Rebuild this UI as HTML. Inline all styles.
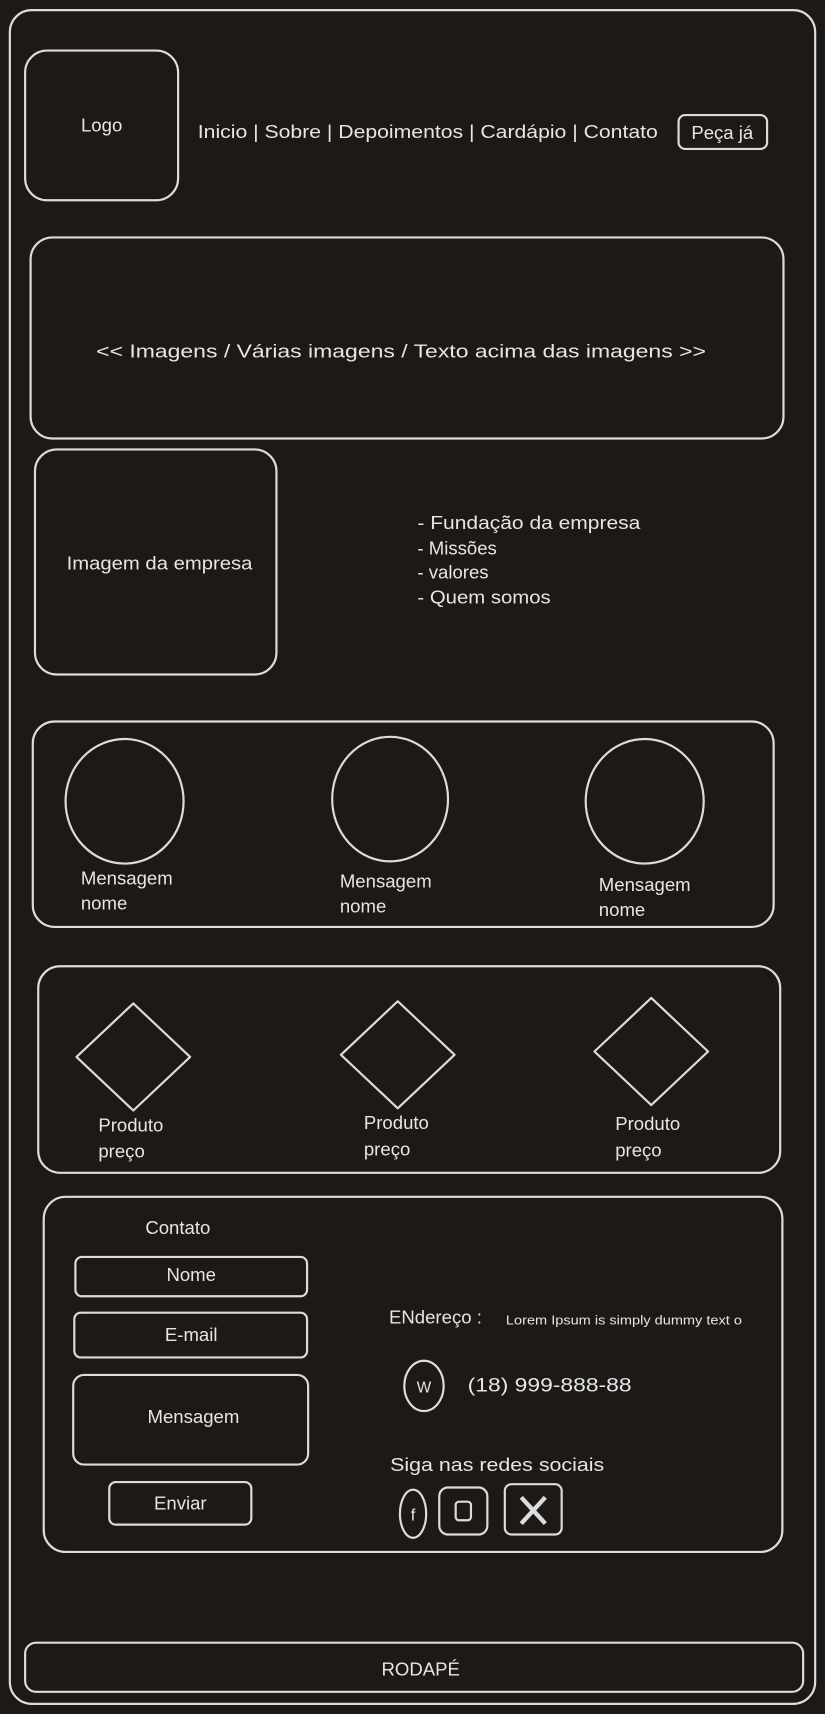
<!DOCTYPE html>
<html><head><meta charset="utf-8"><style>
html,body{margin:0;padding:0;background:#1c1917;}
svg{display:block}
text{font-family:"Liberation Sans",sans-serif;fill:#e6e6e6}
</style></head><body>
<svg width="825" height="1714" viewBox="0 0 755 1568" xmlns="http://www.w3.org/2000/svg" font-size="17">
<rect width="755" height="1568" fill="#1c1917"/>
<g fill="none" stroke="#dcdcdc" stroke-width="2">
<rect x="9" y="9" width="737" height="1550" rx="20"/>
<rect x="23" y="46" width="140" height="137" rx="20"/>
<rect x="621" y="105" width="81" height="31" rx="6"/>
<rect x="28" y="217" width="689" height="184" rx="20"/>
<rect x="32" y="411" width="221" height="206" rx="20"/>
<rect x="30" y="660" width="678" height="188" rx="20"/>
<ellipse cx="114" cy="733" rx="54" ry="57"/>
<ellipse cx="357" cy="731" rx="53" ry="57"/>
<ellipse cx="590" cy="733" rx="54" ry="57"/>
<rect x="35" y="884" width="679" height="189" rx="20"/>
<path d="M122 918 L174 967 L122 1016 L70 967 Z" stroke-linejoin="round"/>
<path d="M364 916 L416 965 L364 1014 L312 965 Z" stroke-linejoin="round"/>
<path d="M596 913 L648 962 L596 1011 L544 962 Z" stroke-linejoin="round"/>
<rect x="40" y="1095" width="676" height="325" rx="20"/>
<rect x="69" y="1150" width="212" height="36" rx="6"/>
<rect x="68" y="1201" width="213" height="41" rx="6"/>
<rect x="67" y="1258" width="215" height="82" rx="10"/>
<rect x="100" y="1356" width="130" height="39" rx="6"/>
<ellipse cx="388" cy="1268" rx="18" ry="23"/>
<ellipse cx="378" cy="1385" rx="12" ry="22"/>
<rect x="402" y="1361" width="44" height="43" rx="8"/>
<rect x="417" y="1374" width="14" height="17" rx="3"/>
<rect x="462" y="1358" width="52" height="46" rx="6"/>
<path d="M477 1370 L499 1394 M499 1370 L477 1394" stroke-width="4"/>
<rect x="23" y="1503" width="712" height="45" rx="10"/>
</g>
<text x="93" y="120" text-anchor="middle">Logo</text>
<text x="181" y="126" font-size="16.5" textLength="421" lengthAdjust="spacingAndGlyphs">Inicio |  Sobre | Depoimentos | Cardápio | Contato</text>
<text x="661" y="127" text-anchor="middle">Peça já</text>
<text x="88" y="327" textLength="558" lengthAdjust="spacingAndGlyphs">&lt;&lt;   Imagens  / Várias imagens / Texto acima das imagens   &gt;&gt;</text>
<text x="146" y="521" text-anchor="middle" textLength="170" lengthAdjust="spacingAndGlyphs">Imagem da empresa</text>
<text x="382" y="484" textLength="204" lengthAdjust="spacingAndGlyphs">- Fundação da empresa</text>
<text x="382" y="507">- Missões</text>
<text x="382" y="529">- valores</text>
<text x="382" y="552" textLength="122" lengthAdjust="spacingAndGlyphs">- Quem somos</text>
<text x="74" y="809">Mensagem</text><text x="74" y="832">nome</text>
<text x="311" y="812">Mensagem</text><text x="311" y="835">nome</text>
<text x="548" y="815">Mensagem</text><text x="548" y="838">nome</text>
<text x="90" y="1035">Produto</text><text x="90" y="1059">preço</text>
<text x="333" y="1033">Produto</text><text x="333" y="1057">preço</text>
<text x="563" y="1034">Produto</text><text x="563" y="1058">preço</text>
<text x="133" y="1129">Contato</text>
<text x="175" y="1172" text-anchor="middle">Nome</text>
<text x="175" y="1227" text-anchor="middle">E-mail</text>
<text x="177" y="1302" text-anchor="middle">Mensagem</text>
<text x="165" y="1381" text-anchor="middle">Enviar</text>
<text x="356" y="1211">ENdereço :</text>
<text x="463" y="1212" font-size="12" textLength="216" lengthAdjust="spacingAndGlyphs">Lorem Ipsum is simply dummy text o</text>
<text x="388" y="1274" text-anchor="middle" font-size="14">W</text>
<text x="428" y="1273" font-size="18" textLength="150" lengthAdjust="spacingAndGlyphs">(18) 999-888-88</text>
<text x="357" y="1346" textLength="196" lengthAdjust="spacingAndGlyphs">Siga nas redes sociais</text>
<text x="378" y="1391" text-anchor="middle" font-size="15">f</text>
<text x="385" y="1533" text-anchor="middle">RODAPÉ</text>
</svg>
</body></html>
